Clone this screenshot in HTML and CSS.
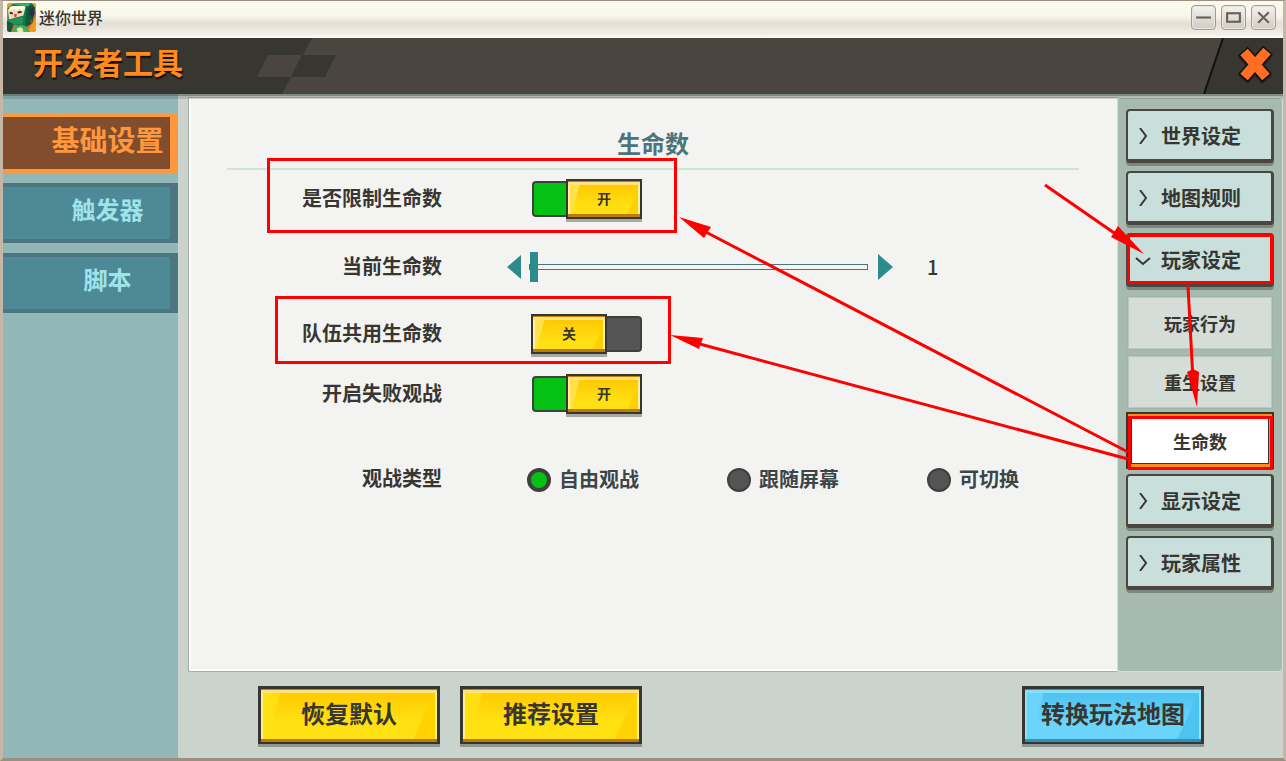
FILE: index.html
```html
<!DOCTYPE html>
<html lang="zh-CN">
<head>
  <meta charset="UTF-8" />
  <meta name="viewport" content="width=device-width, initial-scale=1.0"/>
  <title>迷你世界</title>
  <link rel="stylesheet" href="styles.css">
</head>
<body>
  <div class="window">
    <div class="titlebar">
      <svg class="logo" viewBox="0 0 30 30" aria-hidden="true">
        <defs><clipPath id="logoClip"><rect width="30" height="30" rx="3"/></clipPath></defs>
        <g clip-path="url(#logoClip)">
          <rect width="30" height="30" fill="#d9700f"/>
          <path d="M0 0h9L0 6zM22 0h8v8zM30 14v16h-9z" fill="#f39a1e"/>
          <path d="M1 5L6 1l19-1 4 5-3 16-7 4-10-2-8-5z" fill="#16764a"/>
          <path d="M6 1l16-1 3 2-6 2z" fill="#35b46a"/>
          <path d="M20 5l6-4 3 4-3 16-7 4z" fill="#0f5a3b"/>
          <path d="M1 7l3-3 15 1-2 8-15 4z" fill="#f8d8bb"/>
          <path d="M2 5l2 3 3-2 3 2 3-2 3 2 3-3-1-2H5z" fill="#fffbe8"/>
          <path d="M3 10l3 1M11 10l4-1" stroke="#2b2520" stroke-width="2"/>
          <path d="M7 12l3-1v3l-2 1z" fill="#d5482e"/>
          <path d="M23 6l4-1 2 6-3 4-3-3z" fill="#24324b"/>
          <path d="M2 17l15-3-1 7-8 2-6-3z" fill="#1f9559"/>
          <path d="M0 18l7 4-3 8H0z" fill="#12593a"/>
          <path d="M7 26q5-5 12-2l5 6H5z" fill="#3fae60"/>
          <path d="M10 27q3-3 6-1l1 4h-6z" fill="#f2e9a6"/>
          <path d="M24 17l3 2-2 3z" fill="#c73d2c"/>
        </g>
      </svg>
      <span class="app-name">迷你世界</span>
      <div class="window-buttons">
        <button aria-label="最小化"><svg viewBox="0 0 16 16"><path d="M1 8h14" /></svg></button>
        <button aria-label="最大化"><svg viewBox="0 0 16 16"><rect x="2" y="4" width="12" height="8"/></svg></button>
        <button aria-label="关闭窗口"><svg viewBox="0 0 16 16"><path d="M3 3l10 10M13 3L3 13"/></svg></button>
      </div>
    </div>

    <header class="header">
      <h1>开发者工具</h1>
      <svg class="header-pattern" viewBox="0 0 84 56" aria-hidden="true">
        <path d="M0 0h58L28 56H0z" fill="#383631"/>
        <path d="M14 17h34L37 39H3z" fill="#4a463f"/>
        <path d="M48 17h34L71 39H37z" fill="#383631"/>
      </svg>
      <button class="close" aria-label="关闭">
        <svg viewBox="0 0 80 56" fill="none">
          <path d="M20 0h60v56H1z" fill="#383631"/>
          <path d="M20 0L1 56" stroke="#11110f" stroke-width="2"/>
          <path d="M40 15L64 42M65 14L40 42" stroke="#26241f" stroke-width="13"/>
          <path d="M40 13L64 40M65 12L40 40" stroke="#12110f" stroke-width="13"/>
          <path d="M41 14L63 39M64 13L41 39" stroke="#ff6e22" stroke-width="10"/>
        </svg>
      </button>
    </header>

    <div class="body">
      <nav class="sidebar">
        <button class="tab active">基础设置</button>
        <button class="tab">触发器</button>
        <button class="tab">脚本</button>
      </nav>

      <div class="content">
        <div class="workspace">
          <main class="panel">
            <h2>生命数</h2>

            <div class="row">
              <label class="row-label" for="limitLives">是否限制生命数</label>
              <div class="switch">
                <input type="checkbox" id="limitLives" checked>
                <label class="knob" for="limitLives">开</label>
              </div>
            </div>

            <div class="row middle">
              <label class="row-label" for="lives">当前生命数</label>
              <div class="slider">
                <button class="arrow" aria-label="减少"><svg viewBox="0 0 15 26"><path d="M14 1v24L0 13z"/></svg></button>
                <input type="range" id="lives" min="1" max="100" value="1">
                <button class="arrow" aria-label="增加"><svg viewBox="0 0 15 26"><path d="M0 0v26l15-13z"/></svg></button>
                <output for="lives">1</output>
              </div>
            </div>

            <div class="row near">
              <label class="row-label" for="teamLives">队伍共用生命数</label>
              <div class="switch">
                <input type="checkbox" id="teamLives">
                <label class="knob" for="teamLives">关</label>
              </div>
            </div>

            <div class="row far">
              <label class="row-label" for="spectate">开启失败观战</label>
              <div class="switch">
                <input type="checkbox" id="spectate" checked>
                <label class="knob" for="spectate">开</label>
              </div>
            </div>

            <div class="row">
              <span class="row-label">观战类型</span>
              <div class="radios">
                <label><input type="radio" name="spectateType" checked>自由观战</label>
                <label><input type="radio" name="spectateType">跟随屏幕</label>
                <label><input type="radio" name="spectateType">可切换</label>
              </div>
            </div>
          </main>

          <nav class="menu">
            <button class="menu-item"><svg viewBox="0 0 16 16"><path d="M5 0l6 8-6 8"/></svg>世界设定</button>
            <button class="menu-item"><svg viewBox="0 0 16 16"><path d="M5 0l6 8-6 8"/></svg>地图规则</button>
            <button class="menu-item"><svg viewBox="0 0 16 16"><path d="M1 6l7 6 7-6"/></svg>玩家设定</button>
            <div class="submenu">
              <button class="sub-item">玩家行为</button>
              <button class="sub-item">重生设置</button>
              <button class="sub-item selected">生命数</button>
            </div>
            <button class="menu-item"><svg viewBox="0 0 16 16"><path d="M5 0l6 8-6 8"/></svg>显示设定</button>
            <button class="menu-item"><svg viewBox="0 0 16 16"><path d="M5 0l6 8-6 8"/></svg>玩家属性</button>
          </nav>
        </div>

        <footer class="footer">
          <button class="btn">恢复默认</button>
          <button class="btn">推荐设置</button>
          <button class="btn blue">转换玩法地图</button>
        </footer>
      </div>
    </div>

    <!-- red guide marks drawn over the window -->
    <svg class="marks" width="1286" height="761" viewBox="0 0 1286 761" aria-hidden="true">
      <g fill="none" stroke="#f00" stroke-width="3">
        <rect x="268.5" y="159.5" width="407" height="72"/>
        <rect x="276.5" y="297.5" width="393" height="65"/>
        <rect x="1128.5" y="235.5" width="143" height="47"/>
        <rect x="1129.5" y="417.5" width="142" height="51"/>
        <path d="M1045 185L1120 237M1188 286L1193 380M1128 452L700 229M1128 459L696 343"/>
      </g>
      <g fill="#f00">
        <path d="M1144 254L1111 237l7-11z"/>
        <path d="M1197 407L1187 372l6-3 6 3z"/>
        <path d="M679 217L711 227l-7 11z"/>
        <path d="M670 335L703 338l-4 11z"/>
      </g>
    </svg>
  </div>
</body>
</html>
```
FILE: styles.css
```css
* { box-sizing: border-box; }

body {
  margin: 0;
  font-family: "Noto Sans CJK SC", sans-serif;
  font-weight: 700;
  color: #383631;
}

button {
  margin: 0;
  padding: 0;
  border: none;
  background: none;
  font: inherit;
  color: inherit;
  cursor: pointer;
}

svg { display: block; }

.window {
  position: relative;
  display: flex;
  flex-direction: column;
  min-height: 100vh;
  border: 3px solid #9c8f82;
  border-top-width: 1px;
  border-left-color: #c5b6a6;
  border-right-color: #c5b6a6;
}

/* title bar */
.titlebar {
  display: flex;
  align-items: flex-start;
  height: 37px;
  padding: 2px 7px 0 4px;
  background: linear-gradient(#fafbee 0, #f8f7e9 40%, #e4dfd4 60%, #f3f0e8 92%, #fffefa 100%);
}

.logo { width: 29px; height: 29px; }

.app-name {
  margin-left: 3px;
  font-size: 16px;
  line-height: 28px;
  font-weight: 500;
}

.window-buttons {
  display: flex;
  gap: 5px;
  margin-left: auto;
  padding-top: 2px;
}

.window-buttons button {
  width: 25px;
  height: 25px;
  padding: 3px;
  border: 1px solid #a39a90;
  border-radius: 4px;
  background: linear-gradient(#f5f3ee, #cfcbc5);
  box-shadow: inset 0 0 0 1px #e9e6e0;
}

.window-buttons svg {
  width: 17px;
  height: 17px;
  fill: none;
  stroke: #6a6056;
  stroke-width: 2;
}

/* header */
.header {
  position: relative;
  display: flex;
  height: 56px;
  background: #4a463f;
  box-shadow: 0 2px rgba(60, 70, 68, 0.4), 0 5px rgba(60, 70, 68, 0.2);
}

.header h1 {
  width: 251px;
  margin: 0;
  padding-left: 30px;
  background: #383631;
  color: #ff8a1e;
  font-size: 30px;
  line-height: 46px;
  text-shadow: 1px 2px 1px #11100e;
}

.header-pattern { width: 84px; height: 56px; }

.close { margin-left: auto; }
.close svg { width: 80px; height: 56px; }

/* body */
.body {
  display: flex;
  flex: 1;
  background: #cbd4cc;
}

.sidebar {
  display: flex;
  flex: none;
  flex-direction: column;
  gap: 10px;
  width: 175px;
  padding-top: 19px;
  background: #92b7b7;
}

.tab {
  height: 60px;
  padding: 0 0 8px 42px;
  border: 4px solid #4d7780;
  border-left: none;
  border-right-width: 8px;
  background: #4e8998;
  color: #9fe3ea;
  font-size: 24px;
  line-height: 24px;
}

.tab.active {
  border-color: #ff973d;
  background: #814d2c;
  color: #ff973d;
  font-size: 28px;
}

.content {
  display: flex;
  flex: 1;
  flex-direction: column;
  min-width: 0;
  padding-top: 3px;
}

.workspace {
  display: flex;
  flex: 1;
  padding-left: 10px;
}

.panel {
  flex: 1;
  padding: 0 38px;
  border: 1px solid #a4aea8;
  border-right: none;
  background: #f3f3f1;
  box-shadow: inset 1px -1px #fff, inset 2px -2px #fafaf9;
}

.panel h2 {
  margin: 0 0 9px;
  padding-top: 20px;
  border-bottom: 2px solid #d2e3d6;
  color: #4d737b;
  font-size: 24px;
  line-height: 50px;
  text-align: center;
}

.row {
  display: flex;
  align-items: center;
  gap: 65px;
  height: 40px;
  margin-bottom: 28px;
}

.row.middle { margin-bottom: 27px; }
.row.near { margin-bottom: 20px; }
.row.far { margin-bottom: 45px; }

.row-label {
  width: 215px;
  font-size: 20px;
  line-height: 36px;
  padding-bottom: 2px;
  text-align: right;
}

/* on/off switch */
.switch {
  position: relative;
  width: 112px;
  height: 40px;
  margin-left: 24px;
  padding: 2px 1px;
}

.switch input {
  display: block;
  width: 110px;
  height: 36px;
  margin: 0;
  appearance: none;
  border: 2px solid #403f3b;
  border-radius: 4px;
  background: #555;
}

.switch input:checked { background: #04c213; }

.knob {
  position: absolute;
  top: 0;
  left: 0;
  width: 76px;
  height: 40px;
  border: 2px solid #383631;
  background: linear-gradient(105deg, #ffe14a 15%, transparent 16%), linear-gradient(115deg, transparent 84%, #ffd000 85%), linear-gradient(#ffc400, #ffe012 70%);
  box-shadow: inset 0 1px #c58000, inset 0 -3px #b97c08, inset 0 4px #ffe27c, inset 2px 0 #fff0a0, inset -2px 0 #fff0a0, 0 3px #aaa8a5;
  font-size: 14px;
  line-height: 35px;
  text-align: center;
}

.switch input:checked + .knob { left: auto; right: 1px; }

/* slider */
.slider {
  display: flex;
  align-items: center;
}

.arrow svg { width: 15px; height: 26px; fill: #2c8c8b; }

.slider input {
  width: 339px;
  height: 30px;
  margin: 0 10px 0 7px;
  appearance: none;
  background: none;
}

.slider input::-webkit-slider-runnable-track {
  height: 6px;
  border: 1px solid #47777a;
}

.slider input::-webkit-slider-thumb {
  width: 8px;
  height: 30px;
  margin-top: -13px;
  appearance: none;
  background: #2c8c8b;
}

.slider output {
  margin-left: 34px;
  font-size: 20px;
  line-height: 30px;
  font-weight: 500;
}

/* radio buttons */
.radios {
  display: flex;
  margin-left: 20px;
}

.radios label {
  display: flex;
  align-items: center;
  gap: 8px;
  width: 200px;
  color: #3c4648;
  font-size: 20px;
  line-height: 36px;
}

.radios label:last-child { width: auto; }

.radios input {
  width: 24px;
  height: 24px;
  margin: 2px 0 0;
  appearance: none;
  border: 2px solid #403f3e;
  border-radius: 50%;
  background: #545454;
}

.radios input:checked {
  border-width: 4px;
  background: #04c213;
}

/* right menu */
.menu {
  display: flex;
  flex: none;
  flex-direction: column;
  gap: 8px;
  width: 166px;
  padding: 11px 8px;
  border: 1px solid #cfe1d6;
  border-radius: 4px;
  background: #a7baaf;
}

.menu-item {
  display: flex;
  align-items: center;
  gap: 10px;
  height: 54px;
  padding: 2px 0 0 7px;
  border: 2px solid #4b463f;
  border-right-width: 3px;
  border-bottom-width: 4px;
  border-radius: 4px;
  background: #c9dfdc;
  box-shadow: 0 3px #788880;
  font-size: 20px;
  line-height: 30px;
}

.menu-item svg {
  width: 16px;
  height: 16px;
  fill: none;
  stroke: #383631;
  stroke-width: 2;
}

.submenu {
  display: flex;
  flex-direction: column;
  gap: 7px;
  margin: 2px 0 -3px;
}

.sub-item {
  height: 52px;
  margin: 0 2px;
  border: 1px solid #bac9c0;
  background: #d4ddd8;
  box-shadow: 0 0 1px #7f9389;
  font-size: 18px;
  line-height: 28px;
}

.sub-item.selected {
  height: 57px;
  margin: -3px 0 0;
  border: 2px solid #383631;
  background: #fff;
  box-shadow: inset 0 0 0 3px #ff8a1e, inset 0 0 0 4px #383631;
}

/* bottom buttons */
.footer {
  display: flex;
  gap: 20px;
  height: 86px;
  padding: 14px 79px 0 80px;
}

.btn {
  width: 182px;
  height: 58px;
  padding-bottom: 6px;
  border: 3px solid #383631;
  border-bottom-width: 2px;
  background: linear-gradient(105deg, #ffe012 10%, transparent 11%), linear-gradient(115deg, transparent 87%, #ffd200 88%), linear-gradient(#ffc800, #ffe010 60%);
  box-shadow: inset 0 1px #c58000, inset 0 -3px #b97c08, inset 0 4px #ffe27c, inset 2px 0 #ffef8c, inset -2px 0 #ffef8c, 0 3px #8e9590;
  font-size: 24px;
  line-height: 46px;
}

.btn.blue {
  margin-left: auto;
  background: linear-gradient(105deg, #6ad4fb 10%, transparent 11%), linear-gradient(115deg, transparent 87%, #4cc3f0 88%), linear-gradient(#48c0ee, #6ad4fb 60%);
  box-shadow: inset 0 1px #2f91bd, inset 0 -3px #3390b8, inset 0 4px #86dffb, inset 2px 0 #8fe3ff, inset -2px 0 #8fe3ff, 0 3px #8e9590;
}

.marks {
  position: absolute;
  top: -1px;
  left: -3px;
  pointer-events: none;
}
```
